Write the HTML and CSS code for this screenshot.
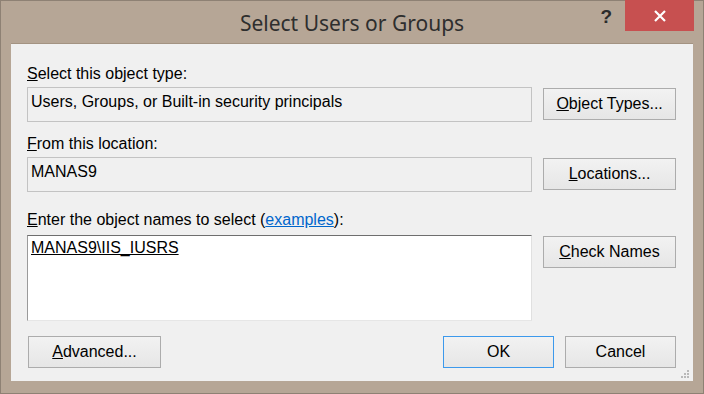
FILE: index.html
```html
<!DOCTYPE html>
<html lang="en">
<head>
    <meta charset="UTF-8">
    <title>Select Users or Groups</title>
    <link rel="stylesheet" href="styles.css">
</head>
<body>
    <div class="window">
        <div class="titlebar">
            <div class="title">Select Users or Groups</div>
            <div class="help">?</div>
            <div class="close">
                <svg width="14" height="14" viewBox="0 0 14 14">
                    <path d="M2 2 L12 12 M12 2 L2 12" stroke="#fff" stroke-width="2.2" fill="none"/>
                </svg>
            </div>
        </div>

        <div class="client">
            <div class="label label-first"><u>S</u>elect this object type:</div>
            <div class="row">
                <div class="field">Users, Groups, or Built-in security principals</div>
                <button class="btn side-btn"><u>O</u>bject Types...</button>
            </div>

            <div class="label label-next"><u>F</u>rom this location:</div>
            <div class="row">
                <div class="field">MANAS9</div>
                <button class="btn side-btn"><u>L</u>ocations...</button>
            </div>

            <div class="label label-names"><u>E</u>nter the object names to select (<a href="#">examples</a>):</div>
            <div class="row">
                <div class="names"><u>MANAS9\IIS_IUSRS</u></div>
                <button class="btn side-btn"><u>C</u>heck Names</button>
            </div>

            <div class="footer">
                <button class="btn advanced"><u>A</u>dvanced...</button>
                <div class="actions">
                    <button class="btn ok">OK</button>
                    <button class="btn cancel">Cancel</button>
                </div>
            </div>

            <svg class="grip" width="10" height="10" viewBox="0 0 10 10">
                <rect x="7" y="1" width="2" height="2" fill="#b8b8b8"/>
                <rect x="4" y="4" width="2" height="2" fill="#b8b8b8"/>
                <rect x="7" y="4" width="2" height="2" fill="#b8b8b8"/>
                <rect x="1" y="7" width="2" height="2" fill="#b8b8b8"/>
                <rect x="4" y="7" width="2" height="2" fill="#b8b8b8"/>
                <rect x="7" y="7" width="2" height="2" fill="#b8b8b8"/>
            </svg>
        </div>
    </div>
</body>
</html>
```

FILE: styles.css
```css
body {
    margin: 0;
    font-family: "Liberation Sans", Arial, sans-serif;
}
.window {
    width: 704px;
    height: 394px;
    box-sizing: border-box;
    background: #b6a696;
    border: 1px solid #8e8174;
    display: flex;
    flex-direction: column;
}
.titlebar {
    position: relative;
    height: 42px;
    flex: none;
}
.title {
    text-align: center;
    font-family: "Noto Sans", sans-serif;
    font-size: 21px;
    line-height: 26px;
    padding-top: 9px;
    color: #2e2e2e;
}
.help {
    position: absolute;
    right: 91px;
    top: 5px;
    font-family: "Liberation Sans", Arial, sans-serif;
    font-weight: bold;
    font-size: 19px;
    color: #2b2b2b;
}
.close {
    position: absolute;
    right: 9px;
    top: -1px;
    width: 69px;
    height: 31px;
    background: #c75050;
    display: flex;
    align-items: center;
    justify-content: center;
}
.client {
    position: relative;
    flex: none;
    margin: 0 10px;
    height: 338px;
    box-sizing: border-box;
    background: #f0f0f0;
    border-top: 1px solid #a39382;
    padding: 21px 17px 0 16px;
    font-size: 16px;
    color: #000;
}
.label {
    line-height: 18px;
    height: 18px;
    margin-bottom: 4px;
}
.label-next {
    margin-top: 13px;
}
.label-names {
    margin-top: 19px;
    margin-bottom: 6px;
}
.label a {
    color: #0066cc;
    text-decoration: underline;
}
.row {
    display: flex;
    align-items: flex-start;
    gap: 10px;
}
.field {
    width: 506px;
    height: 35px;
    box-sizing: border-box;
    border: 1px solid #c3c3c3;
    padding: 5px 3px 0;
    line-height: 18px;
}
.names {
    width: 505px;
    height: 86px;
    box-sizing: border-box;
    background: #fff;
    border-top: 1px solid #6e6e6e;
    border-left: 1px solid #9a9a9a;
    border-right: 1px solid #e0e0e0;
    border-bottom: 1px solid #e6e6e6;
    padding: 3px 3px 0;
    line-height: 18px;
}
.btn {
    font-family: "Liberation Sans", Arial, sans-serif;
    font-size: 16px;
    color: #000;
    height: 32px;
    box-sizing: border-box;
    border: 1px solid #acacac;
    background: linear-gradient(#f2f2f2, #e6e6e6);
    padding: 0;
    display: flex;
    align-items: center;
    justify-content: center;
}
.side-btn {
    width: 133px;
    margin-top: 1px;
    margin-left: 1px;
}
.footer {
    display: flex;
    justify-content: space-between;
    margin-top: 15px;
    padding-left: 1px;
}
.advanced {
    width: 133px;
}
.actions {
    display: flex;
    gap: 11px;
}
.ok {
    width: 111px;
    border-color: #3c99ec;
}
.cancel {
    width: 111px;
}
.grip {
    position: absolute;
    right: 3px;
    bottom: 2px;
}
```
